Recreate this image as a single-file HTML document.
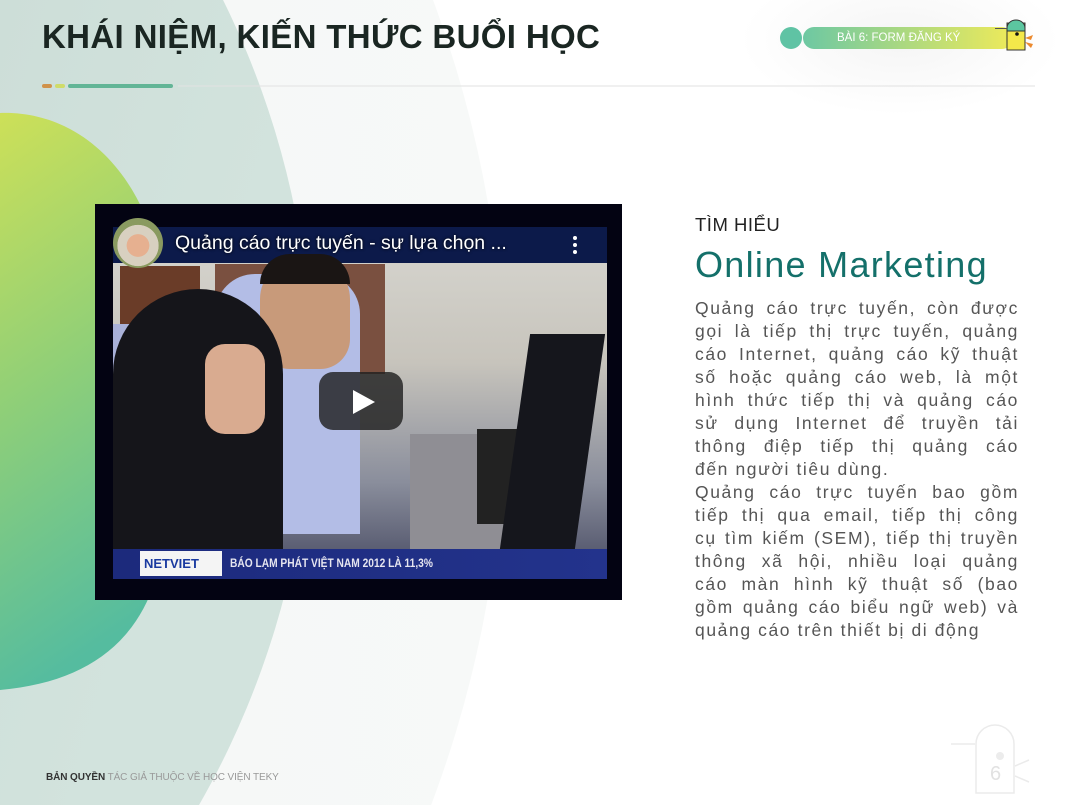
<!DOCTYPE html>
<html><head><meta charset="utf-8"><style>
*{margin:0;padding:0;box-sizing:border-box}
html,body{width:1075px;height:805px;overflow:hidden}
body{background:#fff;position:relative;font-family:"Liberation Sans",sans-serif}
.abs{position:absolute}
.t{font-family:"Liberation Sans","DejaVu Sans",sans-serif}
.body{left:695px;top:297px;width:324px;font-size:17.5px;line-height:23px;color:#555;letter-spacing:1.6px}
.body div{text-align:justify;text-align-last:justify;white-space:nowrap;height:23px}
.body div.l{text-align-last:left}
</style></head><body>
<svg class="abs" style="left:0;top:0" width="1075" height="805">
<defs>
<linearGradient id="lg1" x1="0" y1="0" x2="1" y2="0"><stop offset="0" stop-color="#eef2f1"/><stop offset="1" stop-color="#f7f9f8"/></linearGradient>
<linearGradient id="lg2" x1="0" y1="0" x2="1" y2="0.3"><stop offset="0" stop-color="#b5c6c1"/><stop offset="1" stop-color="#d2e3dd"/></linearGradient>
<linearGradient id="lg3" x1="0" y1="0" x2="0.2" y2="1"><stop offset="0" stop-color="#cde058"/><stop offset="0.5" stop-color="#8fcf78"/><stop offset="1" stop-color="#55bc9f"/></linearGradient>
<linearGradient id="pill" x1="0" y1="0" x2="1" y2="0"><stop offset="0" stop-color="#6dc8a3"/><stop offset="1" stop-color="#eeea5a"/></linearGradient>
<radialGradient id="hd" cx="0.5" cy="0.5" r="0.5"><stop offset="0" stop-color="#f5f5f5"/><stop offset="1" stop-color="#ffffff"/></radialGradient>
</defs>
<circle cx="-642" cy="400" r="1147" fill="url(#lg1)"/>
<circle cx="-544" cy="380" r="856" fill="url(#lg2)"/>
<path d="M0,113 C90,110 165,190 168,330 L168,500 C165,620 110,680 0,690 Z" fill="url(#lg3)"/>
<ellipse cx="900" cy="40" rx="160" ry="75" fill="url(#hd)"/>
<rect x="42" y="84" width="10" height="4" rx="2" fill="#d0924a"/>
<rect x="55" y="84" width="10" height="4" rx="2" fill="#cfdc6a"/>
<rect x="68" y="84" width="105" height="4" rx="2" fill="#62b596"/>
<rect x="178" y="85.5" width="857" height="1" fill="#e2e2e2"/>
<circle cx="791" cy="38" r="11" fill="#5fc3a4"/>
<rect x="803" y="27" width="210" height="22" rx="11" fill="url(#pill)"/>
<rect x="1007" y="23" width="18" height="27" fill="#f3e84a" stroke="#333" stroke-width="1"/>
<path d="M1007 31 V28 a9 8 0 0 1 18 0 V31 Z" fill="#5cc6a0" stroke="#333" stroke-width="1"/>
<line x1="995" y1="28.5" x2="1007" y2="28.5" stroke="#555" stroke-width="1"/>
<circle cx="1017" cy="34" r="1.8" fill="#111"/>
<path d="M1025 38 l8 -3 l-2 5 Z M1025 42 l8 2 l-2 4 Z" fill="#ec8a2f"/>
<g fill="none" stroke="#ebebeb" stroke-width="1.5">
<line x1="951" y1="744" x2="975" y2="744"/>
<path d="M976 793 V744 a12 12 0 0 1 38 0 V793 Z"/>
<path d="M1015 766 l14 -6 M1015 776 l14 6"/>
</g>
<circle cx="1000" cy="756" r="4" fill="#ececec"/>
</svg>
<div class="abs t" style="left:42px;top:18px;font-size:33px;font-weight:bold;color:#1a2622;letter-spacing:0.35px;white-space:nowrap">KHÁI NIỆM, KIẾN THỨC BUỔI HỌC</div>
<div class="abs t" style="left:837px;top:32px;font-size:11.5px;color:#fff;white-space:nowrap">BÀI 6: FORM ĐĂNG KÝ</div>
<div class="abs" style="left:990px;top:763px;font-size:20px;color:#e2e2e2">6</div>

<div class="abs" style="left:95px;top:204px;width:527px;height:396px;background:#030312;overflow:hidden">
 <div class="abs" style="left:18px;top:23px;width:494px;height:340px;background:linear-gradient(180deg,#d7d6d0 0%,#c7c4bc 40%,#8a8e9c 75%,#4e5168 100%)"></div>
 <div class="abs" style="left:18px;top:23px;width:494px;height:36px;background:#0c1a4a"></div>
 <div class="abs" style="left:25px;top:62px;width:80px;height:60px;background:#6a3c28"></div>
 <div class="abs" style="left:120px;top:60px;width:170px;height:110px;background:#7a5040"></div>
 <div class="abs" style="left:18px;top:120px;width:150px;height:245px;background:linear-gradient(90deg,#a8b0d8,#c0c8e6)"></div>
 <div class="abs" style="left:120px;top:70px;width:145px;height:260px;background:#b3bde6;border-radius:40px 40px 0 0"></div>
 <div class="abs" style="left:165px;top:55px;width:90px;height:110px;background:#c89a7a;border-radius:40px 40px 30px 30px"></div>
 <div class="abs" style="left:165px;top:50px;width:90px;height:30px;background:#1a1514;border-radius:40px 40px 0 0"></div>
 <div class="abs" style="left:18px;top:85px;width:170px;height:280px;background:#15151a;border-radius:90px 90px 0 0"></div>
 <div class="abs" style="left:110px;top:140px;width:60px;height:90px;background:#d9ab90;border-radius:20px"></div>
 <div class="abs" style="left:315px;top:230px;width:120px;height:130px;background:#8f8e94"></div>
 <div class="abs" style="left:382px;top:225px;width:50px;height:95px;background:#222"></div>
 <div class="abs" style="left:420px;top:130px;width:75px;height:215px;background:#15161c;transform:skewX(-8deg)"></div>
 <div class="abs" style="left:18px;top:345px;width:494px;height:30px;background:linear-gradient(90deg,#1c2a7c,#23338c)"></div>
 <div class="abs" style="left:45px;top:347px;width:82px;height:25px;background:#f4f4f4;color:#1a3aa0;font-weight:bold;font-size:13px;line-height:25px;padding-left:4px">NETVIET</div>
 <div class="abs" style="left:135px;top:352px;color:#e6e6f0;font-weight:bold;font-size:12px;white-space:nowrap;transform:scaleX(0.85);transform-origin:left">BÁO LẠM PHÁT VIỆT NAM 2012 LÀ 11,3%</div>
 <div class="abs" style="left:18px;top:14px;width:50px;height:50px;border-radius:50%;background:radial-gradient(circle at 50% 55%,#e6b090 0 30%,#d8d0c0 31% 55%,#8a9a60 56%)"></div>
 <div class="abs" style="left:80px;top:28px;color:#fff;font-size:19.5px;white-space:nowrap;text-shadow:0 0 3px #000">Quảng cáo trực tuyến - sự lựa chọn ...</div>
 <div class="abs" style="left:478px;top:32px;width:4px;height:4px;border-radius:50%;background:#fff;box-shadow:0 7px 0 #fff,0 14px 0 #fff"></div>
 <div class="abs" style="left:224px;top:168px;width:84px;height:58px;border-radius:14px;background:rgba(33,33,33,0.82)"></div>
 <div class="abs" style="left:258px;top:186px;width:0;height:0;border-left:22px solid #fff;border-top:12px solid transparent;border-bottom:12px solid transparent"></div>
</div>

<div class="abs t" style="left:695px;top:214px;font-size:18.5px;color:#222;letter-spacing:0.5px">TÌM HIỂU</div>
<div class="abs t" style="left:695px;top:244px;font-size:36px;color:#14706a;letter-spacing:1.3px;white-space:nowrap">Online Marketing</div>
<div class="abs body t">
<div>Quảng cáo trực tuyến, còn được</div>
<div>gọi là tiếp thị trực tuyến, quảng</div>
<div>cáo Internet, quảng cáo kỹ thuật</div>
<div>số hoặc quảng cáo web, là một</div>
<div>hình thức tiếp thị và quảng cáo</div>
<div>sử dụng Internet để truyền tải</div>
<div>thông điệp tiếp thị quảng cáo</div>
<div class="l">đến người tiêu dùng.</div>
<div>Quảng cáo trực tuyến bao gồm</div>
<div>tiếp thị qua email, tiếp thị công</div>
<div>cụ tìm kiếm (SEM), tiếp thị truyền</div>
<div>thông xã hội, nhiều loại quảng</div>
<div>cáo màn hình kỹ thuật số (bao</div>
<div>gồm quảng cáo biểu ngữ web) và</div>
<div class="l">quảng cáo trên thiết bị di động</div>
</div>
<div class="abs t" style="left:46px;top:772px;font-size:10px;color:#999;white-space:nowrap;letter-spacing:-0.1px"><b style="color:#333">BẢN QUYỀN</b> TÁC GIẢ THUỘC VỀ HỌC VIỆN TEKY</div>
</body></html>
